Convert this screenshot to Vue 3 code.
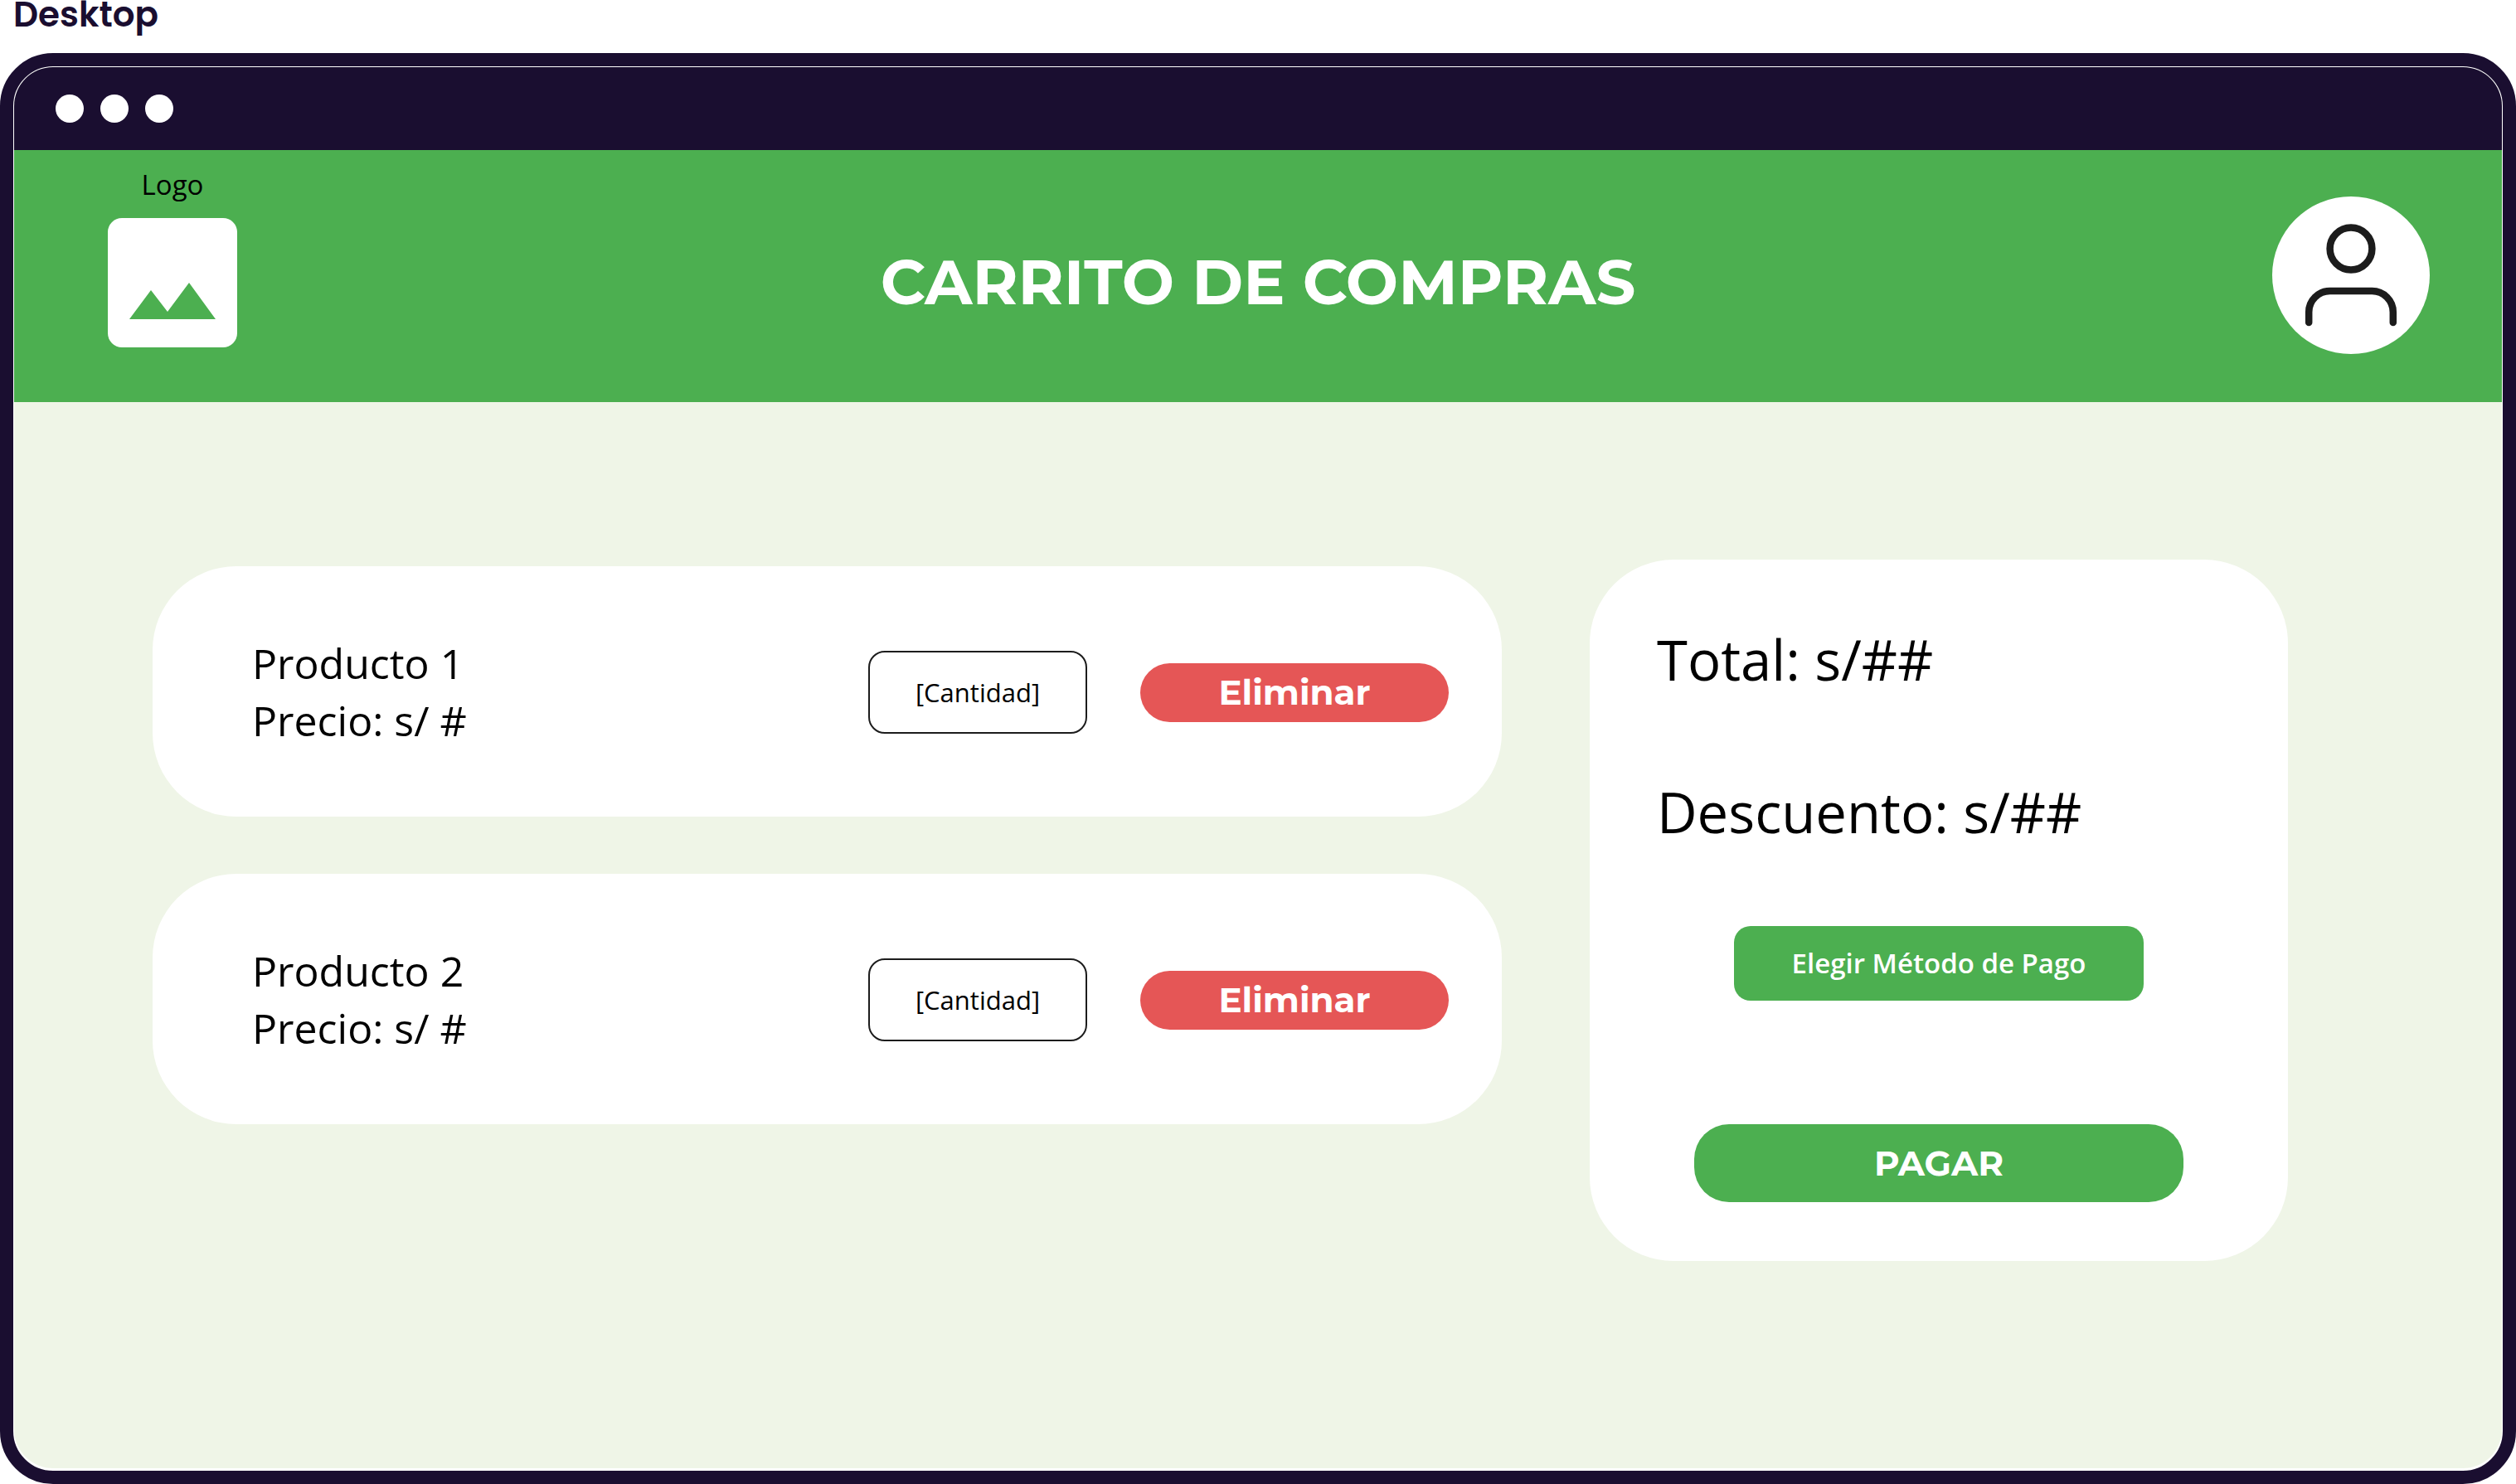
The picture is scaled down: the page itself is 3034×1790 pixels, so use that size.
<script setup>
import { reactive } from 'vue'

const products = reactive([
  { id: 1, name: 'Producto 1', price: 's/ #', quantity: '' },
  { id: 2, name: 'Producto 2', price: 's/ #', quantity: '' },
])
</script>

<template>
  <div class="page">
    <p class="device">Desktop</p>
    <div class="frame">
      <div class="screen">
        <div class="titlebar">
          <span class="dot"></span>
          <span class="dot"></span>
          <span class="dot"></span>
        </div>

        <header class="header">
          <div class="brand">
            <span class="brand-name">Logo</span>
            <svg class="brand-image" viewBox="0 0 156 156" aria-hidden="true">
              <rect width="156" height="156" rx="17" fill="#fff" />
              <path d="M26 122 52 87 72 113 98 78 130 122Z" fill="#4caf50" />
            </svg>
          </div>
          <h1 class="title">CARRITO DE COMPRAS</h1>
          <button class="avatar" type="button" aria-label="Perfil">
            <svg viewBox="0 0 190 190" aria-hidden="true">
              <g fill="none" stroke="#1c1c1c" stroke-width="8.5" stroke-linecap="round">
                <circle cx="95" cy="63" r="25.4" />
                <path d="M44.200 152V139.500A25.400 25.400 0 0 1 69.600 114.100H120.400A25.400 25.400 0 0 1 145.800 139.500V152" />
              </g>
            </svg>
          </button>
        </header>

        <main class="main">
          <ul class="products">
            <li v-for="product in products" :key="product.id" class="product">
              <div class="product-info">
                <p>{{ product.name }}</p>
                <p>Precio: {{ product.price }}</p>
              </div>
              <input
                v-model="product.quantity"
                class="quantity"
                type="text"
                placeholder="[Cantidad]"
                :aria-label="'Cantidad de ' + product.name"
              />
              <button class="remove" type="button">Eliminar</button>
            </li>
          </ul>

          <section class="summary">
            <p class="amount">Total: s/##</p>
            <p class="amount">Descuento: s/##</p>
            <button class="method" type="button">Elegir Método de Pago</button>
            <button class="pay" type="button">PAGAR</button>
          </section>
        </main>
      </div>
    </div>
  </div>
</template>

<style>
body {
  margin: 0;
  background: #fff;
}
</style>

<style scoped>
.page {
  --green: #4caf50;
  --dark: #1a0e30;
  --heading: Montserrat, Inter, sans-serif;
  display: flex;
  flex-direction: column;
  min-height: 100vh;
  color: #000;
  font-family: 'Open Sans', sans-serif;
}

.page * {
  box-sizing: border-box;
}

p,
h1,
ul {
  margin: 0;
  padding: 0;
}

button {
  padding: 0;
  border: 0;
  color: #fff;
  cursor: pointer;
}

.device {
  height: 64px;
  padding-left: 16px;
  color: var(--dark);
  font: 600 42px/36px Poppins, Inter, sans-serif;
}

.frame {
  display: flex;
  flex: 1;
  padding: 1px 1px 3px;
  border: 16px solid var(--dark);
  border-radius: 64px;
  background: #fff;
}

.screen {
  flex: 1;
  min-width: 0;
  overflow: hidden;
  border-radius: 47px;
  background: #eff5e7;
}

.titlebar {
  display: flex;
  gap: 20px;
  height: 100px;
  padding: 33px 50px;
  background: var(--dark);
}

.dot {
  width: 34px;
  height: 34px;
  border-radius: 50%;
  background: #fff;
}

.header {
  display: grid;
  grid-template-columns: 1fr auto 1fr;
  align-items: center;
  height: 304px;
  padding: 0 87px 2px;
  background: var(--green);
}

.brand {
  display: flex;
  flex-direction: column;
  align-items: center;
  justify-self: start;
  gap: 17px;
  padding: 0 0 45px 26px;
}

.brand-name {
  font-size: 33px;
  line-height: 46px;
}

.brand-image {
  width: 156px;
  height: 156px;
}

.title {
  padding-top: 16px;
  color: #fff;
  font: 700 75px/92px var(--heading);
}

.avatar {
  justify-self: end;
  width: 190px;
  height: 190px;
  border-radius: 50%;
  background: #fff;
}

.avatar svg {
  display: block;
}

.main {
  display: grid;
  grid-template-columns: 1627fr 842fr;
  align-items: start;
  gap: 106px;
  padding: 190px 258px 190px 167px;
}

.products {
  display: flex;
  flex-direction: column;
  gap: 69px;
  padding-top: 8px;
  list-style: none;
}

.product {
  display: flex;
  align-items: center;
  gap: 64px;
  padding: 83px 64px 81px 120px;
  border-radius: 101px;
  background: #fff;
}

.product-info {
  flex: 1;
  font-size: 50px;
  line-height: 69px;
}

.quantity {
  width: 264px;
  height: 100px;
  padding: 0;
  border: 2px solid #1c1c1c;
  border-radius: 20px;
  background: #fff;
  color: #000;
  font: 400 31px/44px 'Open Sans', sans-serif;
  text-align: center;
}

.quantity::placeholder {
  color: #000;
  opacity: 1;
}

.remove {
  width: 372px;
  height: 71px;
  border-radius: 36px;
  background: #e55656;
  font: 700 42px/52px var(--heading);
}

.summary {
  display: flex;
  flex-direction: column;
  padding: 74px 81px 71px;
  border-radius: 101px;
  background: #fff;
}

.amount {
  margin-bottom: 91px;
  font-size: 67px;
  line-height: 93px;
}

.method,
.pay {
  align-self: center;
  background: var(--green);
}

.method {
  width: 494px;
  height: 90px;
  border-radius: 20px;
  font: 600 33px/46px 'Open Sans', sans-serif;
}

.pay {
  width: 590px;
  height: 94px;
  margin-top: 149px;
  border-radius: 42px;
  font: 700 42px/52px var(--heading);
}
</style>
